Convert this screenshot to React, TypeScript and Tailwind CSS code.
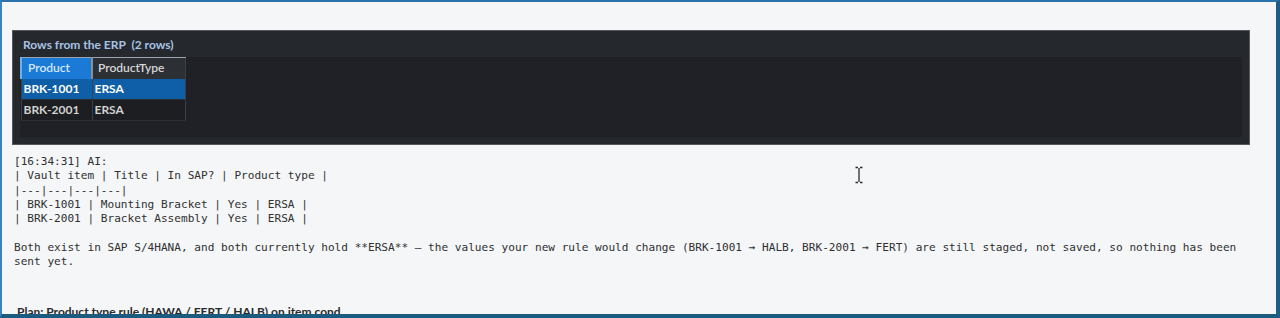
const rows = [
  { product: 'BRK-1001', type: 'ERSA', selected: true },
  { product: 'BRK-2001', type: 'ERSA', selected: false },
];

const log = [
  '[16:34:31] AI:',
  '| Vault item | Title | In SAP? | Product type |',
  '|---|---|---|---|',
  '| BRK-1001 | Mounting Bracket | Yes | ERSA |',
  '| BRK-2001 | Bracket Assembly | Yes | ERSA |',
  '',
  'Both exist in SAP S/4HANA, and both currently hold **ERSA** — the values your new rule would change (BRK-1001 → HALB, BRK-2001 → FERT) are still staged, not saved, so nothing has been',
  'sent yet.',
];

export default function App() {
  return (
    <div className="relative w-[1280px] h-[318px] overflow-hidden bg-[#f4f6f8] border-t-2 border-l-2 border-r-[4px] border-b-[4px] border-t-[#2b72ad] border-l-[#3b82c0] border-r-[#1d5d86] border-b-[#1c5b80] font-['Lato',sans-serif]">
      <div className="pl-[10px] pt-[28px] pr-[22px]">
        {/* ERP result panel */}
        <div className="w-[1238px] h-[115px] bg-[#25282d] border border-[#55585d] flex flex-col">
          <div className="h-[26px] pl-[10px] pt-[5px] text-[12px] font-bold text-[#a8c4e4]">
            Rows from the ERP&nbsp;&nbsp;(2 rows)
          </div>
          <div className="mx-[7px] h-[80px] bg-[#1f2126]">
            <table className="border-collapse text-[12px] font-bold border border-[#3d4046]">
              <thead>
                <tr className="h-[21px]">
                  <th className="w-[71px] p-0 pl-[6px] text-left font-semibold bg-[#1b7ad6] text-[#d4e8fb] border-t border-t-[#9aa3ad] border-l-2 border-l-[#6cb2f2]">
                    Product
                  </th>
                  <th className="w-[93px] p-0 pl-[5px] text-left font-semibold bg-[#2c2f34] text-[#d6d6d6] border-t border-t-[#9aa3ad] border-l-2 border-l-[#8a8f96]">
                    ProductType
                  </th>
                </tr>
              </thead>
              <tbody>
                {rows.map((r) => (
                  <tr key={r.product} className={`h-[21px] ${r.selected ? 'bg-[#0e5fa7] text-white' : 'bg-[#1c1e22] text-[#d2d2d2]'}`}>
                    <td className="p-0 pl-[2px] border-r border-r-[#3d4046] border-b border-b-[#2c2f34]">{r.product}</td>
                    <td className="p-0 pl-[2px] border-b border-b-[#2c2f34]">{r.type}</td>
                  </tr>
                ))}
              </tbody>
            </table>
          </div>
        </div>

        {/* chat transcript */}
        <pre className="mt-[10px] pl-[2px] font-['DejaVu_Sans_Mono',monospace] text-[11.1px] leading-[14.25px] text-[#303030]">
          {log.join('\n')}
        </pre>

        <div className="mt-[35px] pl-[5px] text-[12px] font-bold text-[#2a2a2a] leading-[16px]">
          Plan: Product type rule (HAWA / FERT / HALB) on item cond
        </div>
      </div>

      {/* mouse I-beam cursor */}
      <svg className="absolute left-[852px] top-[164px]" width="10" height="18" viewBox="0 0 10 18">
        <path d="M1.5 1.5h2.5M6 1.5h2.5M5 2v14M1.5 16.5h2.5M6 16.5h2.5" stroke="#2b2b2b" strokeWidth="1.3" fill="none" />
      </svg>
    </div>
  );
}
